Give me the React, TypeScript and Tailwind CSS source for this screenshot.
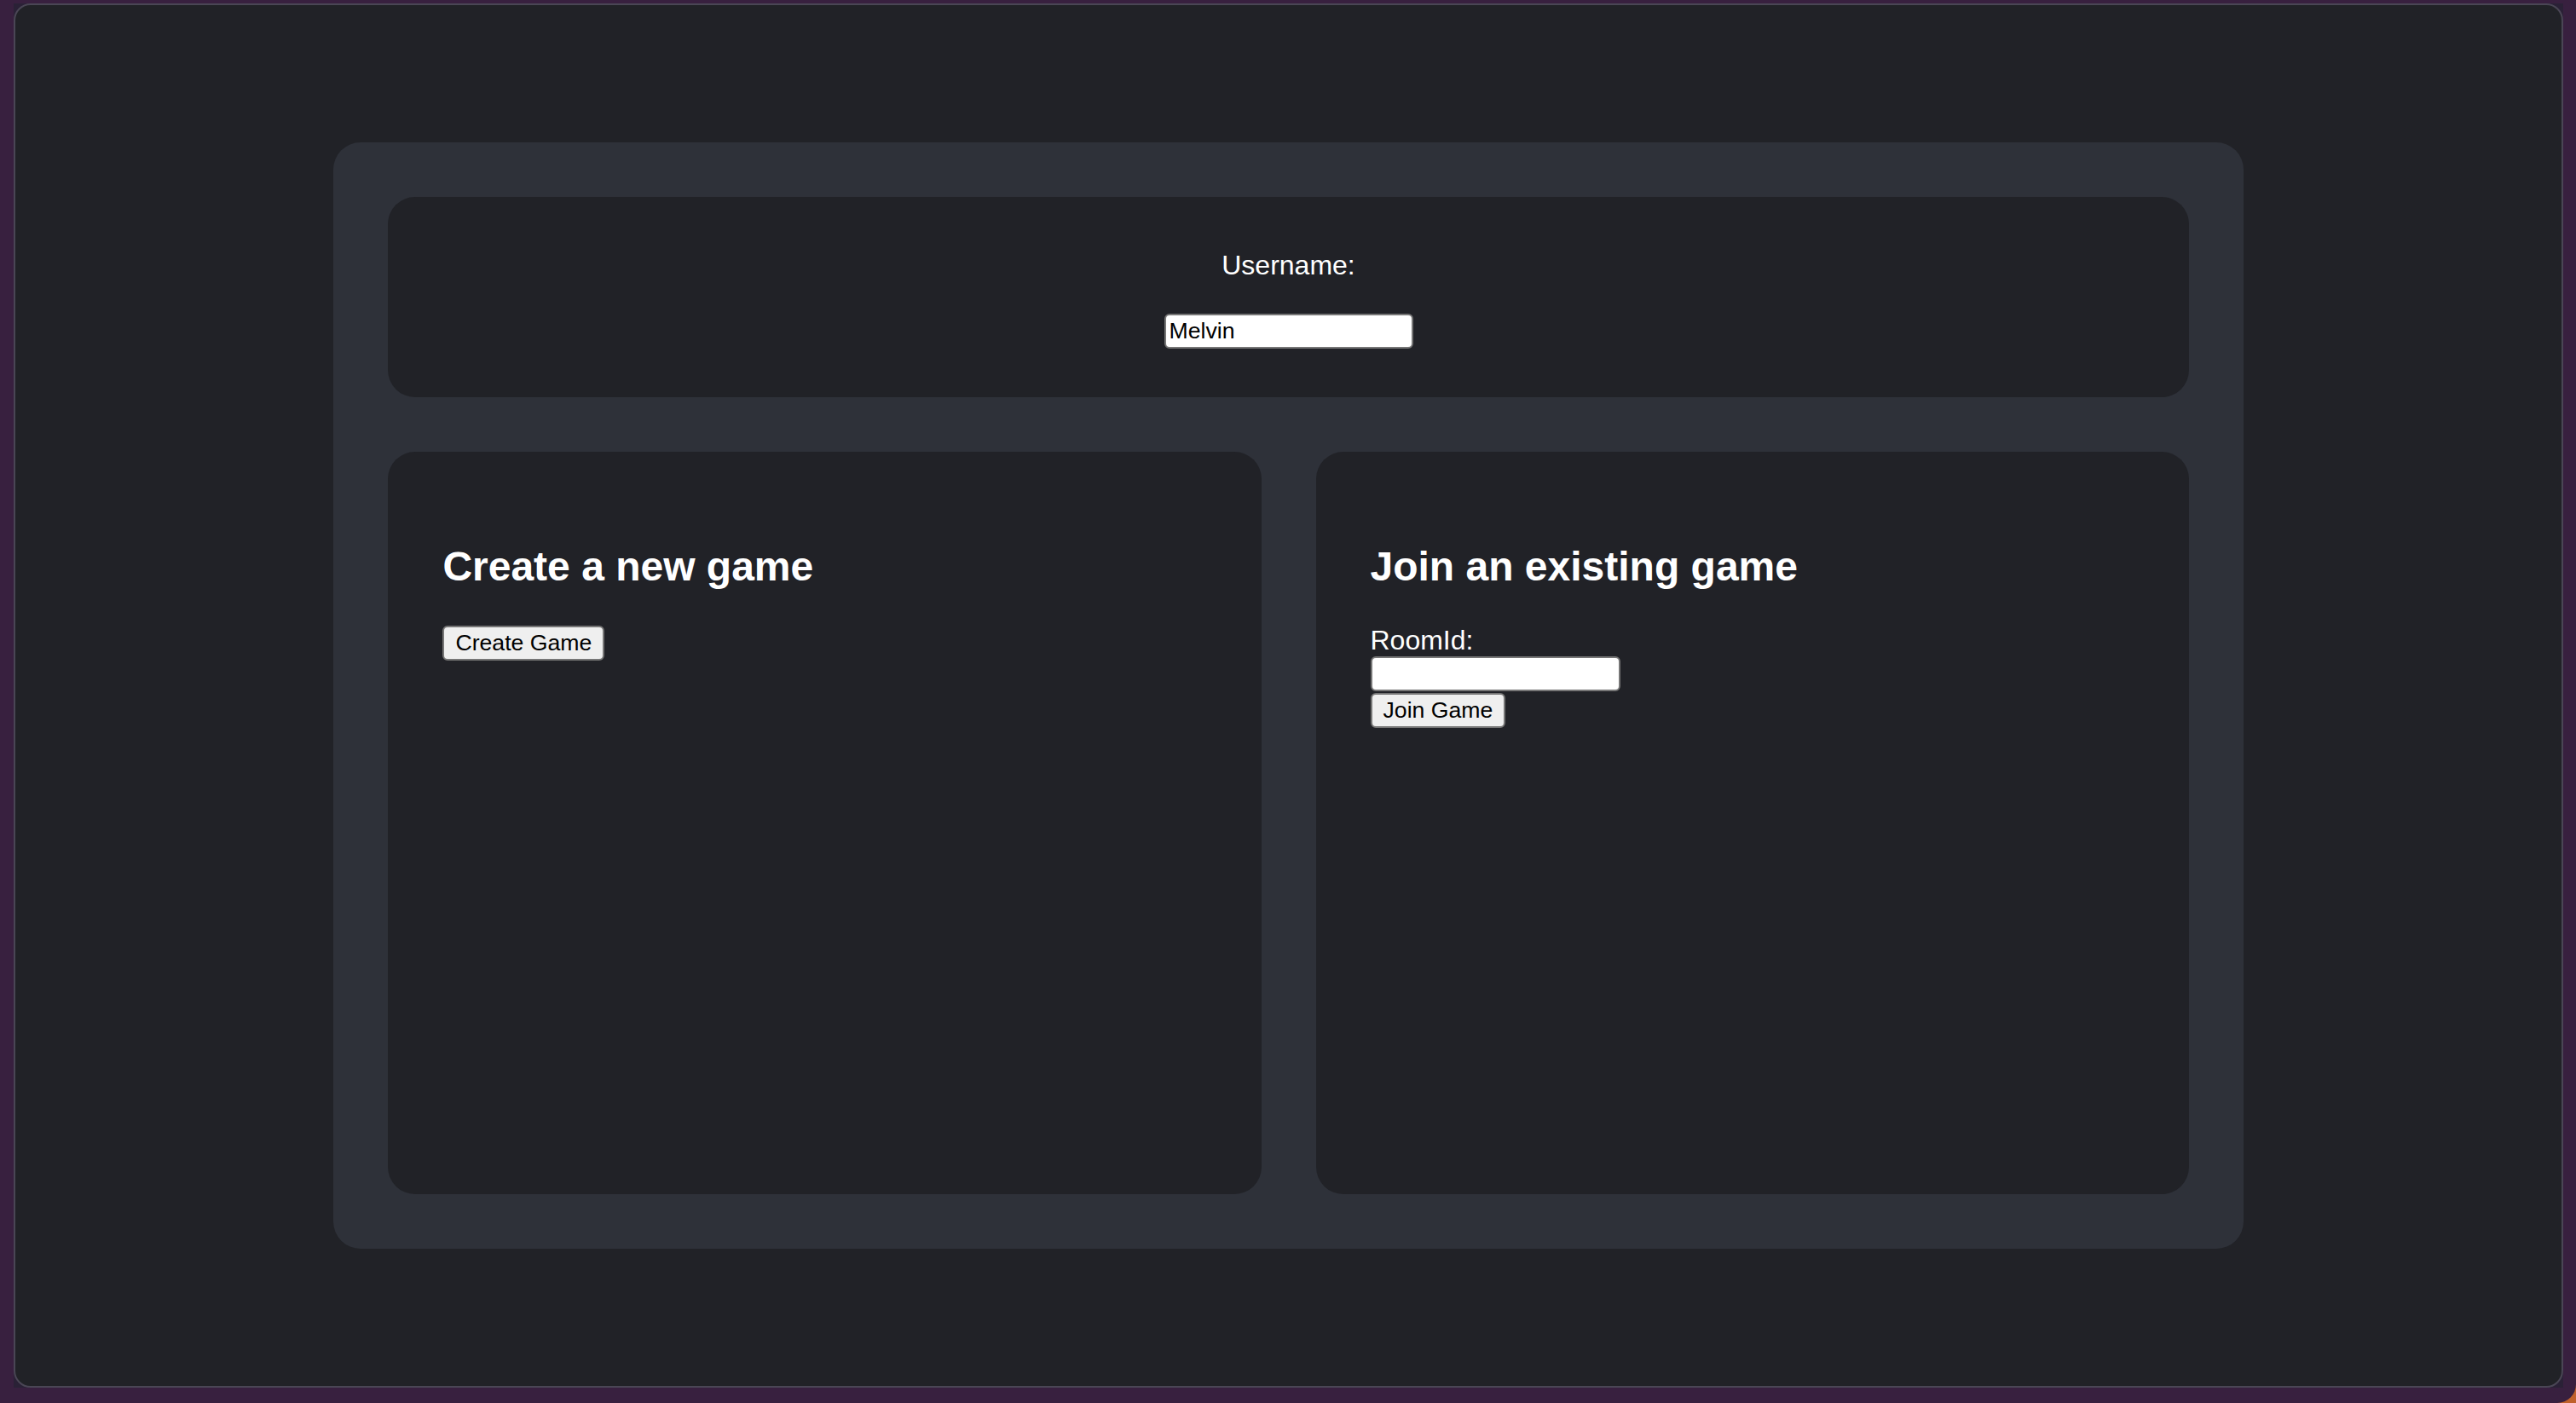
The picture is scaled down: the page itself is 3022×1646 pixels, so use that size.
import { useState } from 'react'

const font = { fontFamily: '"Liberation Sans", Arial, Helvetica, sans-serif' }

function Panel({ children, className = '' }: { children: React.ReactNode; className?: string }) {
  return <div className={`rounded-[32px] bg-[#212227] ${className}`}>{children}</div>
}

function GrayButton({ text }: { text: string }) {
  return (
    <button className="h-[41px] rounded-[6px] border-2 border-[#767676] bg-[#efefef] px-[13px] text-[26.67px] leading-none text-black">
      {text}
    </button>
  )
}

export default function App() {
  const [username, setUsername] = useState('Melvin')
  const [roomId, setRoomId] = useState('')

  return (
    <div className="h-[1646px] w-[3022px] bg-[#c0602a]" style={font}>
      <div className="flex h-full w-full rounded-br-[22px] bg-[#38203f] pl-[16px] pr-[15px] pt-[4px] pb-[18px]">
        <div className="flex-1 bg-[#2a2136]">
          <div className="flex h-full w-full items-center justify-center rounded-[20px] border-2 border-[#4a4655] bg-[#212227]">
            <div className="flex h-[1298px] w-3/4 flex-col gap-16 rounded-[32px] bg-[#2e3139] p-16">
              <Panel className="flex h-[235px] flex-col items-center justify-center gap-[38px] pt-[4px]">
                <label className="text-[32px] leading-[37px] text-white">Username:</label>
                <input
                  value={username}
                  onChange={(e) => setUsername(e.target.value)}
                  className="h-[41px] w-[292px] rounded-[6px] border-2 border-[#767676] bg-white px-[4px] text-[26.67px] text-black outline-none"
                />
              </Panel>
              <div className="grid flex-1 grid-cols-2 gap-16">
                <Panel className="p-16">
                  <h2 className="mt-[43px] mb-[42px] text-[48px] font-bold leading-[55px] text-white">Create a new game</h2>
                  <GrayButton text="Create Game" />
                </Panel>
                <Panel className="p-16">
                  <h2 className="mt-[43px] mb-[42px] text-[48px] font-bold leading-[55px] text-white">Join an existing game</h2>
                  <div className="flex flex-col items-start">
                    <label className="text-[32px] leading-[35px] text-white">RoomId:</label>
                    <input
                      value={roomId}
                      onChange={(e) => setRoomId(e.target.value)}
                      className="mt-[1px] h-[41px] w-[293px] rounded-[6px] border-2 border-[#767676] bg-white px-[4px] text-[26.67px] text-black outline-none"
                    />
                    <div className="mt-[2px]">
                      <GrayButton text="Join Game" />
                    </div>
                  </div>
                </Panel>
              </div>
            </div>
          </div>
        </div>
      </div>
    </div>
  )
}
